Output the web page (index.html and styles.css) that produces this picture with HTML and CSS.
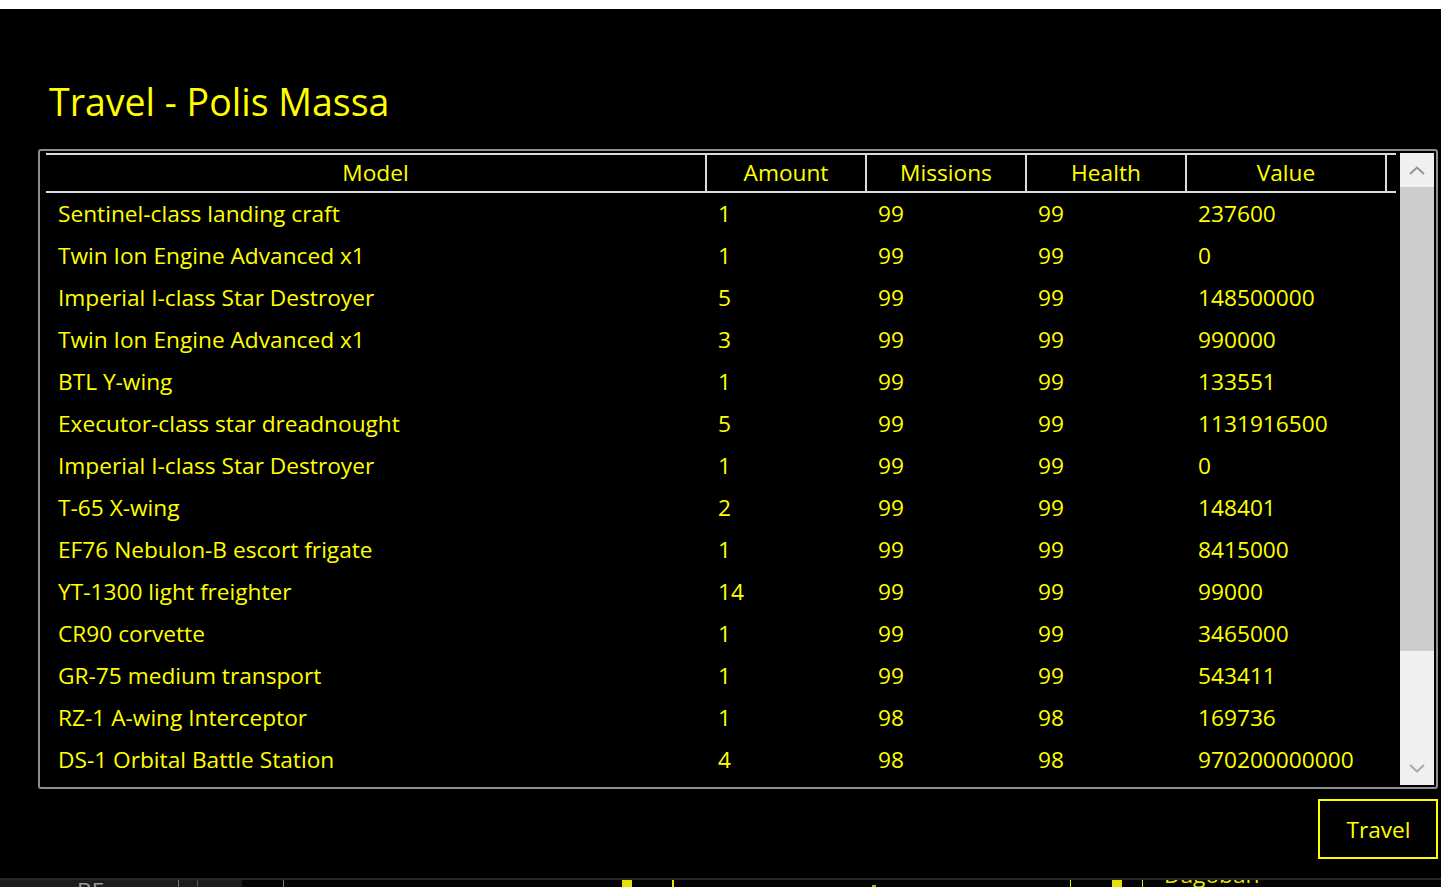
FILE: index.html
```html
<!DOCTYPE html>
<html lang="en">
<head>
<meta charset="utf-8">
<title>Travel - Polis Massa</title>
<link rel="stylesheet" href="styles.css">
</head>
<body>
<div class="topbar"></div>
<main class="window">
  <h1 class="title">Travel - Polis Massa</h1>
  <section class="gridbox">
    <div class="grid">
      <div class="row head">
        <div class="hcell">Model</div>
        <div class="hcell">Amount</div>
        <div class="hcell">Missions</div>
        <div class="hcell">Health</div>
        <div class="hcell">Value</div>
        <div class="hfill"></div>
      </div>
      <div class="row"><div class="cell">Sentinel-class landing craft</div><div class="cell">1</div><div class="cell">99</div><div class="cell">99</div><div class="cell">237600</div></div>
      <div class="row"><div class="cell">Twin Ion Engine Advanced x1</div><div class="cell">1</div><div class="cell">99</div><div class="cell">99</div><div class="cell">0</div></div>
      <div class="row"><div class="cell">Imperial I-class Star Destroyer</div><div class="cell">5</div><div class="cell">99</div><div class="cell">99</div><div class="cell">148500000</div></div>
      <div class="row"><div class="cell">Twin Ion Engine Advanced x1</div><div class="cell">3</div><div class="cell">99</div><div class="cell">99</div><div class="cell">990000</div></div>
      <div class="row"><div class="cell">BTL Y-wing</div><div class="cell">1</div><div class="cell">99</div><div class="cell">99</div><div class="cell">133551</div></div>
      <div class="row"><div class="cell">Executor-class star dreadnought</div><div class="cell">5</div><div class="cell">99</div><div class="cell">99</div><div class="cell">1131916500</div></div>
      <div class="row"><div class="cell">Imperial I-class Star Destroyer</div><div class="cell">1</div><div class="cell">99</div><div class="cell">99</div><div class="cell">0</div></div>
      <div class="row"><div class="cell">T-65 X-wing</div><div class="cell">2</div><div class="cell">99</div><div class="cell">99</div><div class="cell">148401</div></div>
      <div class="row"><div class="cell">EF76 Nebulon-B escort frigate</div><div class="cell">1</div><div class="cell">99</div><div class="cell">99</div><div class="cell">8415000</div></div>
      <div class="row"><div class="cell">YT-1300 light freighter</div><div class="cell">14</div><div class="cell">99</div><div class="cell">99</div><div class="cell">99000</div></div>
      <div class="row"><div class="cell">CR90 corvette</div><div class="cell">1</div><div class="cell">99</div><div class="cell">99</div><div class="cell">3465000</div></div>
      <div class="row"><div class="cell">GR-75 medium transport</div><div class="cell">1</div><div class="cell">99</div><div class="cell">99</div><div class="cell">543411</div></div>
      <div class="row"><div class="cell">RZ-1 A-wing Interceptor</div><div class="cell">1</div><div class="cell">98</div><div class="cell">98</div><div class="cell">169736</div></div>
      <div class="row"><div class="cell">DS-1 Orbital Battle Station</div><div class="cell">4</div><div class="cell">98</div><div class="cell">98</div><div class="cell">970200000000</div></div>
    </div>
    <div class="scrollbar">
      <div class="sbtn">
        <svg width="16" height="9" viewBox="0 0 16 9"><polyline points="1,8 8,1.5 15,8" fill="none" stroke="#959595" stroke-width="2"/></svg>
      </div>
      <div class="thumb"></div>
      <div class="track"></div>
      <div class="sbtn">
        <svg width="16" height="9" viewBox="0 0 16 9"><polyline points="1,1 8,7.5 15,1" fill="none" stroke="#a8a8a8" stroke-width="2"/></svg>
      </div>
    </div>
  </section>
  <div class="actions">
    <button class="travel">Travel</button>
  </div>
</main>
<footer class="behind">
  <div class="b-seg b-gray b-first"><span class="b-text">BE</span></div>
  <div class="b-line b-line-mid"></div>
  <div class="b-seg b-gray b-w18"></div>
  <div class="b-line b-line-dark"></div>
  <div class="b-seg b-gray b-w44"></div>
  <div class="b-seg b-w41"></div>
  <div class="b-line b-line-mid"></div>
  <div class="b-seg b-w338"></div>
  <div class="b-block"></div>
  <div class="b-seg b-w40"></div>
  <div class="b-yline"></div>
  <div class="b-seg b-w198"></div>
  <div class="b-dot"></div>
  <div class="b-seg b-w194"></div>
  <div class="b-yline thin"></div>
  <div class="b-seg b-w41"></div>
  <div class="b-block"></div>
  <div class="b-seg b-w20"></div>
  <div class="b-yline thin"></div>
  <div class="b-seg b-w21"></div>
  <span class="b-text yellow">Dagobah</span>
</footer>
</body>
</html>
```
FILE: styles.css
```css
* { box-sizing: border-box; }
html, body {
  margin: 0;
  padding: 0;
  height: 887px;
  overflow: hidden;
  background: #000;
  font-family: "Open Sans", "Noto Sans", sans-serif;
  color: #ffff00;
}
.topbar {
  height: 9px;
  background: #fff;
}
.window {
  padding-left: 38px;
}
.title {
  margin: 70px 0 0 11px;
  font-weight: 400;
  font-size: 37.5px;
  line-height: 45px;
  height: 45px;
  color: #ffff00;
}
.gridbox {
  margin-top: 25px;
  width: 1400px;
  height: 640px;
  border: 2px solid #8e8e92;
  border-radius: 3px;
  padding: 2px 2px 2px 6px;
  display: flex;
  gap: 4px;
}
.grid {
  width: 1350px;
  font-size: 22.7px;
}
.row {
  display: grid;
  grid-template-columns: 661px 160px 160px 160px 200px 9px;
  height: 42px;
  line-height: 42.5px;
}
.row.head {
  height: 40px;
  line-height: 36.5px;
  border-top: 2px solid #dcdcdc;
  border-bottom: 2px solid #dcdcdc;
}
.hcell {
  text-align: center;
  border-right: 2px solid #dcdcdc;
  white-space: nowrap;
}
.cell {
  padding-left: 11px;
  white-space: nowrap;
}
.cell:first-child {
  padding-left: 12px;
}
.scrollbar {
  width: 34px;
  height: 632px;
  display: flex;
  flex-direction: column;
  background: #f0f0f0;
}
.sbtn {
  height: 34px;
  display: flex;
  align-items: center;
  justify-content: center;
  background: #f0f0f0;
}
.thumb {
  height: 464px;
  background: #cdcdcd;
}
.track {
  flex: 1;
  background: #f0f0f0;
}
.actions {
  width: 1400px;
  margin-top: 10px;
  display: flex;
  justify-content: flex-end;
}
.travel {
  width: 120px;
  height: 60px;
  background: #000;
  border: 2px solid #ffff00;
  color: #ffff00;
  font-family: "Open Sans", "Noto Sans", sans-serif;
  font-size: 22.7px;
  padding: 0 0 0 1px;
  margin: 0;
}
.behind {
  margin-top: 19px;
  height: 9px;
  border-top: 2px solid #282828;
  display: flex;
  overflow: hidden;
  background: #050505;
}
.b-seg { flex: none; }
.b-gray { background: #1d1d1d; }
.b-first { width: 178px; padding-left: 77px; }
.b-w18 { width: 18px; }
.b-w44 { width: 44px; }
.b-w40 { width: 40px; }
.b-w41 { width: 41px; }
.b-w338 { width: 338px; }
.b-w198 { width: 198px; }
.b-w194 { width: 194px; }
.b-w20 { width: 20px; }
.b-w21 { width: 21px; }
.b-line { width: 1px; flex: none; }
.b-line-mid { background: #7a7a7a; }
.b-line-dark { background: #555; }
.b-block { width: 10px; flex: none; background: #e4e400; }
.b-yline { width: 2px; flex: none; background: #e8e800; }
.b-yline.thin { width: 1px; }
.b-dot { width: 4px; height: 2px; flex: none; align-self: flex-end; background: #c8b000; }
.b-text {
  display: block;
  font-size: 22.7px;
  line-height: 24px;
  margin-top: -17px;
  color: #9a9a9a;
  white-space: nowrap;
}
.b-first .b-text { margin-top: 0; line-height: 24px; transform: translateY(-1px); }
.b-text.yellow { color: #e8e800; flex: none; }
```
